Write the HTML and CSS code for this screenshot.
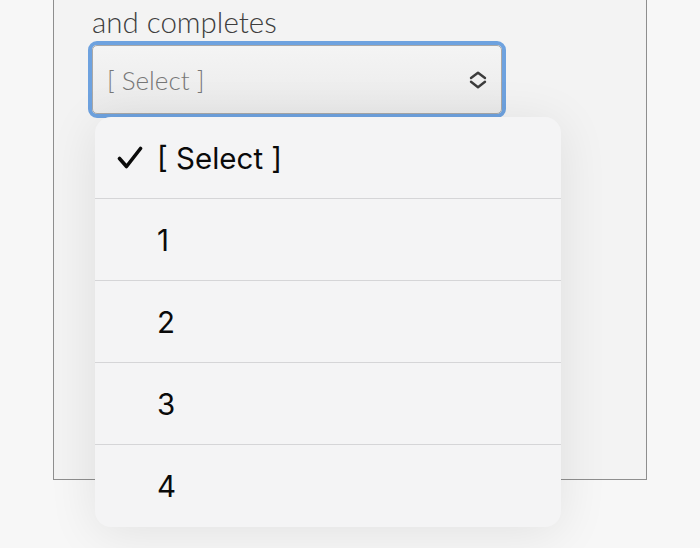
FILE: index.html
```html
<!DOCTYPE html>
<html lang="en">
<head>
    <meta charset="UTF-8">
    <meta name="viewport" content="width=device-width, initial-scale=1.0">
    <title>Select</title>
    <link rel="stylesheet" href="styles.css">
</head>
<body>
    <section class="frame">
        <p class="lead">and completes</p>
        <div class="ring">
            <div class="picker">
                <span class="picker_value">[ Select ]</span>
                <svg class="picker_icon" width="18" height="18" viewBox="0 0 18 18">
                    <polyline points="2,7 9,1.8 16,7" />
                    <polyline points="2,10.8 9,16.2 16,10.8" />
                </svg>
            </div>
        </div>
    </section>

    <ul class="menu">
        <li class="menu_item">
            <span class="menu_check">
                <svg width="26" height="24" viewBox="0 0 26 24">
                    <polyline points="2.5,12.5 9.5,20.5 23.5,2.5" />
                </svg>
            </span>[ Select ]
        </li>
        <li class="menu_item"><span class="menu_check"></span>1</li>
        <li class="menu_item"><span class="menu_check"></span>2</li>
        <li class="menu_item"><span class="menu_check"></span>3</li>
        <li class="menu_item"><span class="menu_check"></span>4</li>
    </ul>
</body>
</html>
```

FILE: styles.css
```css
html,body {
    margin: 0;
    height: 548px;
    overflow: hidden;
}

body {
    background: #f7f7f7;
    font-family: Lato, "Liberation Sans", sans-serif;
}

.frame {
    box-sizing: border-box;
    width: 594px;
    height: 480px;
    margin-left: 53px;
    padding: 5px 0 0 38px;
    border: 1px solid #8e8e8e;
    border-top: 0;
    background: #f3f3f3;
}

.lead {
    margin: 0;
    font-size: 29.5px;
    font-weight: 300;
    line-height: 34px;
    color: #3e3e3e;
}

.ring {
    width: 410px;
    height: 69px;
    margin: 2px 0 0 -4px;
    border: 4px solid #6ea2df;
    border-radius: 9px;
}

.picker {
    box-sizing: border-box;
    height: 69px;
    display: flex;
    align-items: center;
    justify-content: space-between;
    padding: 0 14px;
    border: 1px solid #a8a8a8;
    border-radius: 5px;
    background: linear-gradient(#f4f4f4, #eaeaea);
}

.picker_value {
    font-size: 26px;
    font-weight: 300;
    color: #777;
}

.picker_icon polyline {
    fill: none;
    stroke: #3c3c3c;
    stroke-width: 2.4;
    stroke-linecap: round;
    stroke-linejoin: round;
}

.menu {
    position: absolute;
    left: 95px;
    top: 117px;
    width: 466px;
    margin: 0;
    padding: 0;
    list-style: none;
    border-radius: 16px;
    background: #f4f4f5;
    box-shadow: 0 6px 50px rgba(0, 0, 0, 0.09);
    overflow: hidden;
}

.menu_item {
    height: 81px;
    display: flex;
    align-items: center;
    border-bottom: 1px solid #d5d5d7;
    font-family: Inter, "Liberation Sans", sans-serif;
    font-size: 29.5px;
    color: #0a0a0a;
}

.menu_item:last-child {
    border-bottom: 0;
    height: 82px;
}

.menu_check {
    box-sizing: border-box;
    width: 62px;
    padding-left: 22px;
    display: flex;
    align-items: center;
}

.menu_check polyline {
    fill: none;
    stroke: #0a0a0a;
    stroke-width: 3.6;
    stroke-linecap: round;
    stroke-linejoin: round;
}
```
